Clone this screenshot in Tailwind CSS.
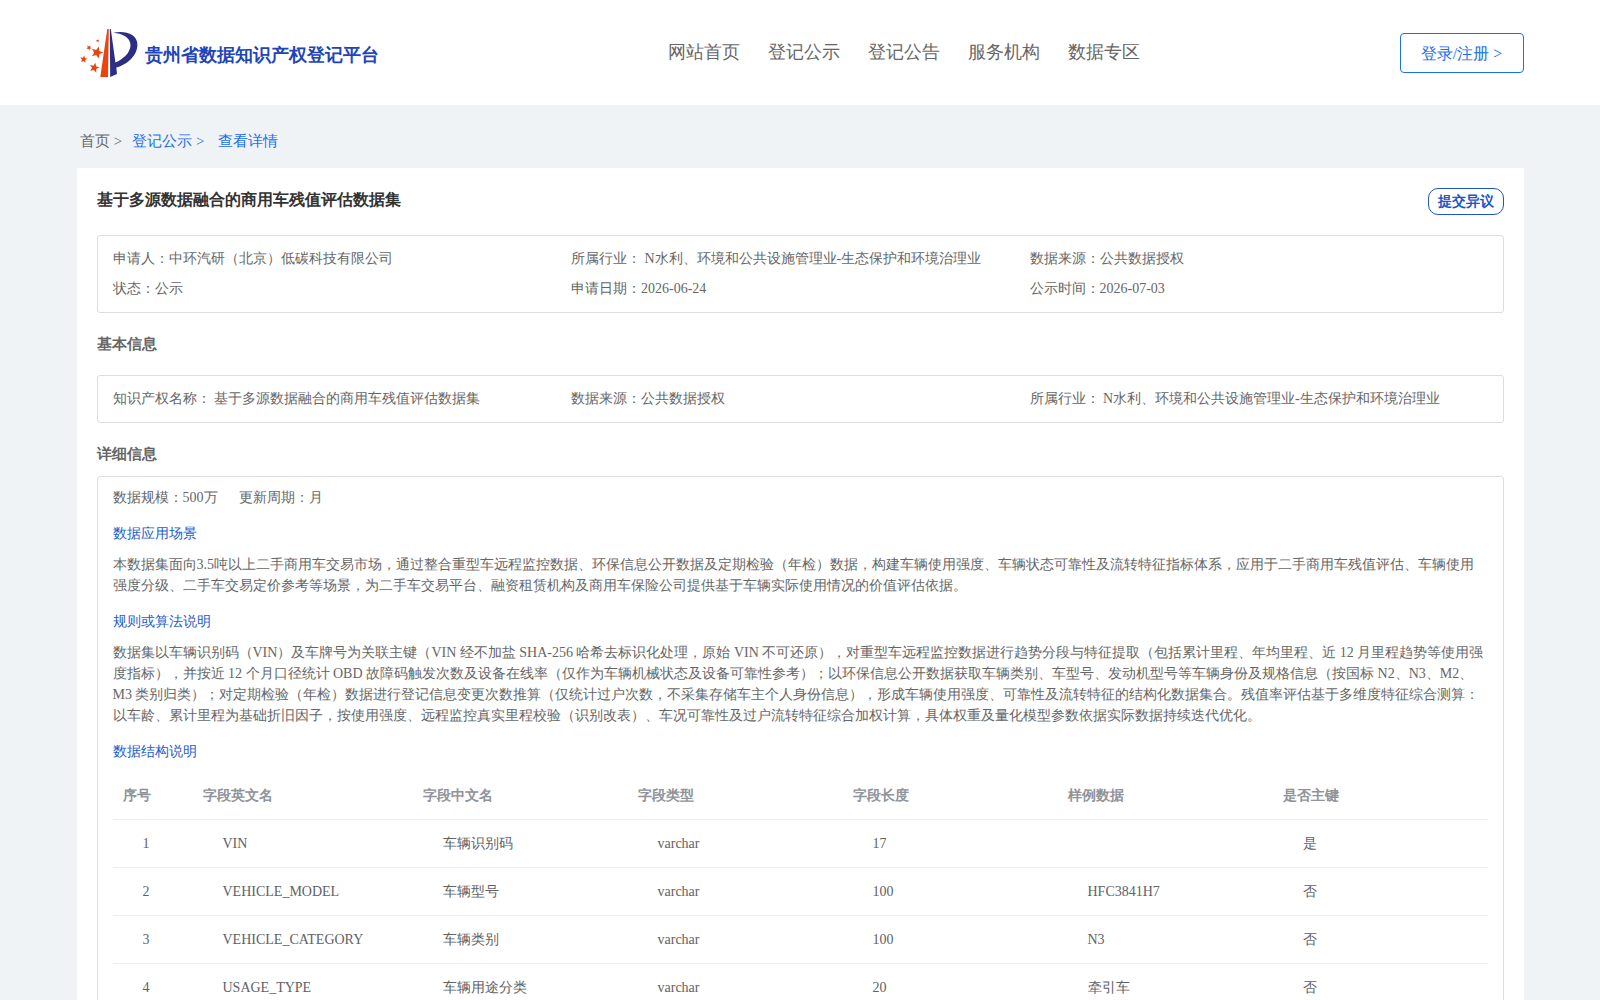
<!DOCTYPE html>
<html lang="en">

<head>
    <meta charset="UTF-8">
    <meta name="viewport" content="width=device-width, initial-scale=1.0">
    <title>贵州省数据知识产权登记平台</title>
    <script src="https://cdn.jsdelivr.net/npm/@tailwindcss/browser@4"></script>
</head>

<body class="h-[1000px] overflow-hidden bg-[#eff3f6] font-['Liberation_Serif',serif] text-sm text-[#666]">
    <!-- header -->
    <header class="h-[105px] bg-white pl-[77px] pr-[76px] flex justify-between">
        <div class="flex pt-[27px]">
            <svg class="w-[62px] h-[52px]" viewBox="0 0 62 52">
                <defs>
                    <path id="star" d="M0-5L1.300-1.700 4.750-1.550 2.100.7 2.950 4.050 0 2.200-2.950 4.050-2.100.7-4.750-1.550-1.300-1.700z" />
                </defs>
                <path fill="#e8450f" d="M30.300 2h1.500L31 50H23.300z" />
                <path fill="#2b2e83" d="M32.800 2h1l4.600 33.600C46 32 53.500 26 53.500 18 53.500 10.500 45 6.300 36.300 5.700 48 3.200 60.300 7 60.400 17.300 60.500 29 50 37.500 39.300 40.600L40 47 33.200 50z" />
                <g fill="#e8450f">
                    <use href="#star" transform="translate(20 25.500) rotate(18) scale(1.25)" />
                    <use href="#star" transform="translate(17.300 40.700) rotate(14) scale(1.02)" />
                    <use href="#star" transform="translate(6.700 32.300) rotate(8) scale(.78)" />
                    <use href="#star" transform="translate(12 20.700) rotate(30) scale(.56)" />
                    <use href="#star" transform="translate(20.700 13.800) rotate(10) scale(.36)" />
                </g>
            </svg>
            <h1 class="ml-[6px] mt-[15px] h-[26px] leading-[26px] text-lg font-bold text-[#2145b8] whitespace-nowrap">贵州省数据知识产权登记平台</h1>
        </div>
        <nav class="flex gap-7 pt-[39px] ml-[29px] text-lg leading-[26px]">
            <a href="#">网站首页</a>
            <a href="#">登记公示</a>
            <a href="#">登记公告</a>
            <a href="#">服务机构</a>
            <a href="#">数据专区</a>
        </nav>
        <a href="#" class="mt-[33px] w-[124px] h-10 leading-[40px] pr-px border border-[#1a6fee] rounded text-center text-base text-[#1a6fee]">登录/注册 &gt;</a>
    </header>

    <!-- breadcrumb -->
    <div class="h-[63px] pl-20 pt-[26px] flex text-[15px] leading-[20px] text-[#1a6fee]">
        <span class="text-[#666]">首页 &gt;</span>
        <span class="ml-[10px]">登记公示 &gt;</span>
        <span class="ml-[13.5px]">查看详情</span>
    </div>

    <main class="ml-[76.5px] w-[1447.5px] h-[1100px] bg-white px-5 pt-5">
        <div class="flex justify-between h-[47px]">
            <h2 class="text-base leading-[24px] font-bold text-[#333]">基于多源数据融合的商用车残值评估数据集</h2>
            <button class="w-[76px] h-[27px] leading-[25px] border border-[#1c55c4] rounded-[10px] font-bold text-[#1c55c4]">提交异议</button>
        </div>

        <div class="h-[78px] px-[15px] pt-[8px] border border-[#ddd] rounded-[3px] grid grid-cols-3 content-start leading-[30px]">
            <p>申请人：中环汽研（北京）低碳科技有限公司</p>
            <p>所属行业： N水利、环境和公共设施管理业-生态保护和环境治理业</p>
            <p>数据来源：公共数据授权</p>
            <p>状态：公示</p>
            <p>申请日期：2026-06-24</p>
            <p>公示时间：2026-07-03</p>
        </div>

        <h3 class="h-[62px] leading-[62px] text-[15px] font-bold">基本信息</h3>
        <div class="h-[48px] px-[15px] pt-[8px] border border-[#ddd] rounded-[3px] grid grid-cols-3 content-start leading-[30px]">
            <p>知识产权名称： 基于多源数据融合的商用车残值评估数据集</p>
            <p>数据来源：公共数据授权</p>
            <p>所属行业： N水利、环境和公共设施管理业-生态保护和环境治理业</p>
        </div>

        <h3 class="h-[53px] leading-[62px] text-[15px] font-bold">详细信息</h3>
        <div class="h-[900px] pl-[15px] pr-4 border border-[#ddd] rounded-[3px] leading-[21px]">
            <p class="pt-[10px] flex gap-[21px]"><span>数据规模：500万</span><span>更新周期：月</span></p>
            <h4 class="mt-[15px] text-[#1c5ccf]">数据应用场景</h4>
            <p class="mt-[10px]">本数据集面向3.5吨以上二手商用车交易市场，通过整合重型车远程监控数据、环保信息公开数据及定期检验（年检）数据，构建车辆使用强度、车辆状态可靠性及流转特征指标体系，应用于二手商用车残值评估、车辆使用强度分级、二手车交易定价参考等场景，为二手车交易平台、融资租赁机构及商用车保险公司提供基于车辆实际使用情况的价值评估依据。</p>
            <h4 class="mt-[15px] text-[#1c5ccf]">规则或算法说明</h4>
            <p class="mt-[10px]">数据集以车辆识别码（VIN）及车牌号为关联主键（VIN 经不加盐 SHA-256 哈希去标识化处理，原始 VIN 不可还原），对重型车远程监控数据进行趋势分段与特征提取（包括累计里程、年均里程、近 12 月里程趋势等使用强度指标），并按近 12 个月口径统计 OBD 故障码触发次数及设备在线率（仅作为车辆机械状态及设备可靠性参考）；以环保信息公开数据获取车辆类别、车型号、发动机型号等车辆身份及规格信息（按国标 N2、N3、M2、M3 类别归类）；对定期检验（年检）数据进行登记信息变更次数推算（仅统计过户次数，不采集存储车主个人身份信息），形成车辆使用强度、可靠性及流转特征的结构化数据集合。残值率评估基于多维度特征综合测算：以车龄、累计里程为基础折旧因子，按使用强度、远程监控真实里程校验（识别改表）、车况可靠性及过户流转特征综合加权计算，具体权重及量化模型参数依据实际数据持续迭代优化。</p>
            <h4 class="mt-[15px] text-[#1c5ccf]">数据结构说明</h4>

            <table class="mt-[10px] w-[1375px] table-fixed border-separate border-spacing-0 text-left text-[#606266]">
                <colgroup>
                    <col class="w-20">
                    <col class="w-[220px]">
                    <col class="w-[215px]">
                    <col class="w-[215px]">
                    <col class="w-[215px]">
                    <col class="w-[215px]">
                    <col class="w-[215px]">
                </colgroup>
                <thead>
                    <tr class="h-12 text-[#909399] [&>th]:px-[10px] [&>th]:border-b [&>th]:border-[#ebeef5]">
                        <th>序号</th>
                        <th>字段英文名</th>
                        <th>字段中文名</th>
                        <th>字段类型</th>
                        <th>字段长度</th>
                        <th>样例数据</th>
                        <th>是否主键</th>
                    </tr>
                </thead>
                <tbody id="fields"></tbody>
            </table>
        </div>
    </main>
</body>

</html>
<script>
    let fields = [
        ["VIN", "车辆识别码", "varchar", "17", "", "是"],
        ["VEHICLE_MODEL", "车辆型号", "varchar", "100", "HFC3841H7", "否"],
        ["VEHICLE_CATEGORY", "车辆类别", "varchar", "100", "N3", "否"],
        ["USAGE_TYPE", "车辆用途分类", "varchar", "20", "牵引车", "否"],
    ];

    let tbody = document.getElementById("fields");
    fields.forEach((el, i) => {
        let tr = document.createElement("tr");
        tr.className = "h-12";
        [i + 1, ...el].forEach((text) => {
            let td = document.createElement("td");
            td.className = "pl-[30px] border-b border-[#ebeef5]";
            td.innerText = text;
            tr.append(td);
        });
        tbody.append(tr);
    });
</script>
